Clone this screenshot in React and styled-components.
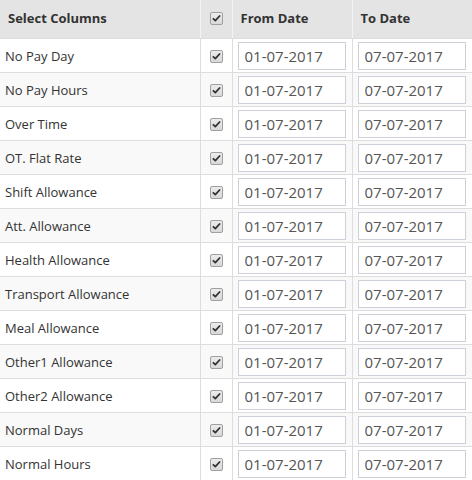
import React from 'react';
import styled, { createGlobalStyle } from 'styled-components';

const GlobalStyle = createGlobalStyle`
    html, body {
        margin: 0;
        padding: 0;
        background: #ffffff;
        font-family: 'Open Sans', 'Liberation Sans', sans-serif;
    }
`;

const Table = styled.table`
    width: 472px;
    border-collapse: collapse;
    table-layout: fixed;
    font-size: 13px;
    color: #333333;
`;

const HeadCell = styled.th`
    height: 36px;
    padding: 0 8px 2px;
    background: #e4e4e4;
    text-align: left;
    font-weight: 700;
    font-size: 13px;
    color: #333333;
    border-right: 1px solid #f4f4f4;
    border-bottom: 1px solid #dddddd;
    &:last-child {
        border-right: none;
    }
`;

const Row = styled.tr`
    background: ${(p) => (p.$striped ? '#f9f9f9' : '#ffffff')};
`;

const Cell = styled.td`
    height: 33px;
    padding: 0 5px;
    border-right: 1px solid #dddddd;
    border-bottom: 1px solid #dddddd;
    vertical-align: middle;
    &:last-child {
        border-right: none;
    }
`;

const CheckCell = styled(Cell)`
    padding: 0;
    text-align: center;
`;

const CheckHead = styled(HeadCell)`
    padding: 0 0 2px;
    text-align: center;
`;

const Box = styled.span`
    display: inline-block;
    width: 11px;
    height: 11px;
    border: 1px solid #a0a0a0;
    border-radius: 2px;
    background: linear-gradient(#ececec, #d8d8d8);
    vertical-align: middle;
    position: relative;
    top: -1px;
    svg {
        display: block;
    }
`;

const DateInput = styled.input`
    box-sizing: border-box;
    width: 108px;
    height: 28px;
    padding: 0 6px;
    border: 1px solid #ccd0d9;
    background: #ffffff;
    font-family: 'Open Sans', 'Liberation Sans', sans-serif;
    font-size: 15px;
    color: #555555;
    display: block;
    outline: none;
`;

const Check = () => (
    <Box>
        <svg width='11' height='11' viewBox='0 0 11 11'>
            <path
                d='M2.4 5.8 L4.3 7.6 L8.6 3'
                fill='none'
                stroke='#333333'
                strokeWidth='1.8'
                strokeLinecap='round'
                strokeLinejoin='round'
            />
        </svg>
    </Box>
);

const rows = [
    'No Pay Day',
    'No Pay Hours',
    'Over Time',
    'OT. Flat Rate',
    'Shift Allowance',
    'Att. Allowance',
    'Health Allowance',
    'Transport Allowance',
    'Meal Allowance',
    'Other1 Allowance',
    'Other2 Allowance',
    'Normal Days',
    'Normal Hours',
];

export default function App() {
    return (
        <>
            <GlobalStyle />
            <Table>
                <colgroup>
                    <col style={{ width: '200px' }} />
                    <col style={{ width: '32px' }} />
                    <col style={{ width: '120px' }} />
                    <col style={{ width: '120px' }} />
                </colgroup>
                <thead>
                    <tr>
                        <HeadCell>Select Columns</HeadCell>
                        <CheckHead>
                            <Check />
                        </CheckHead>
                        <HeadCell>From Date</HeadCell>
                        <HeadCell>To Date</HeadCell>
                    </tr>
                </thead>
                <tbody>
                    {rows.map((name, i) => (
                        <Row key={name} $striped={i % 2 === 1}>
                            <Cell>{name}</Cell>
                            <CheckCell>
                                <Check />
                            </CheckCell>
                            <Cell>
                                <DateInput type='text' defaultValue='01-07-2017' />
                            </Cell>
                            <Cell>
                                <DateInput type='text' defaultValue='07-07-2017' />
                            </Cell>
                        </Row>
                    ))}
                </tbody>
            </Table>
        </>
    );
}
